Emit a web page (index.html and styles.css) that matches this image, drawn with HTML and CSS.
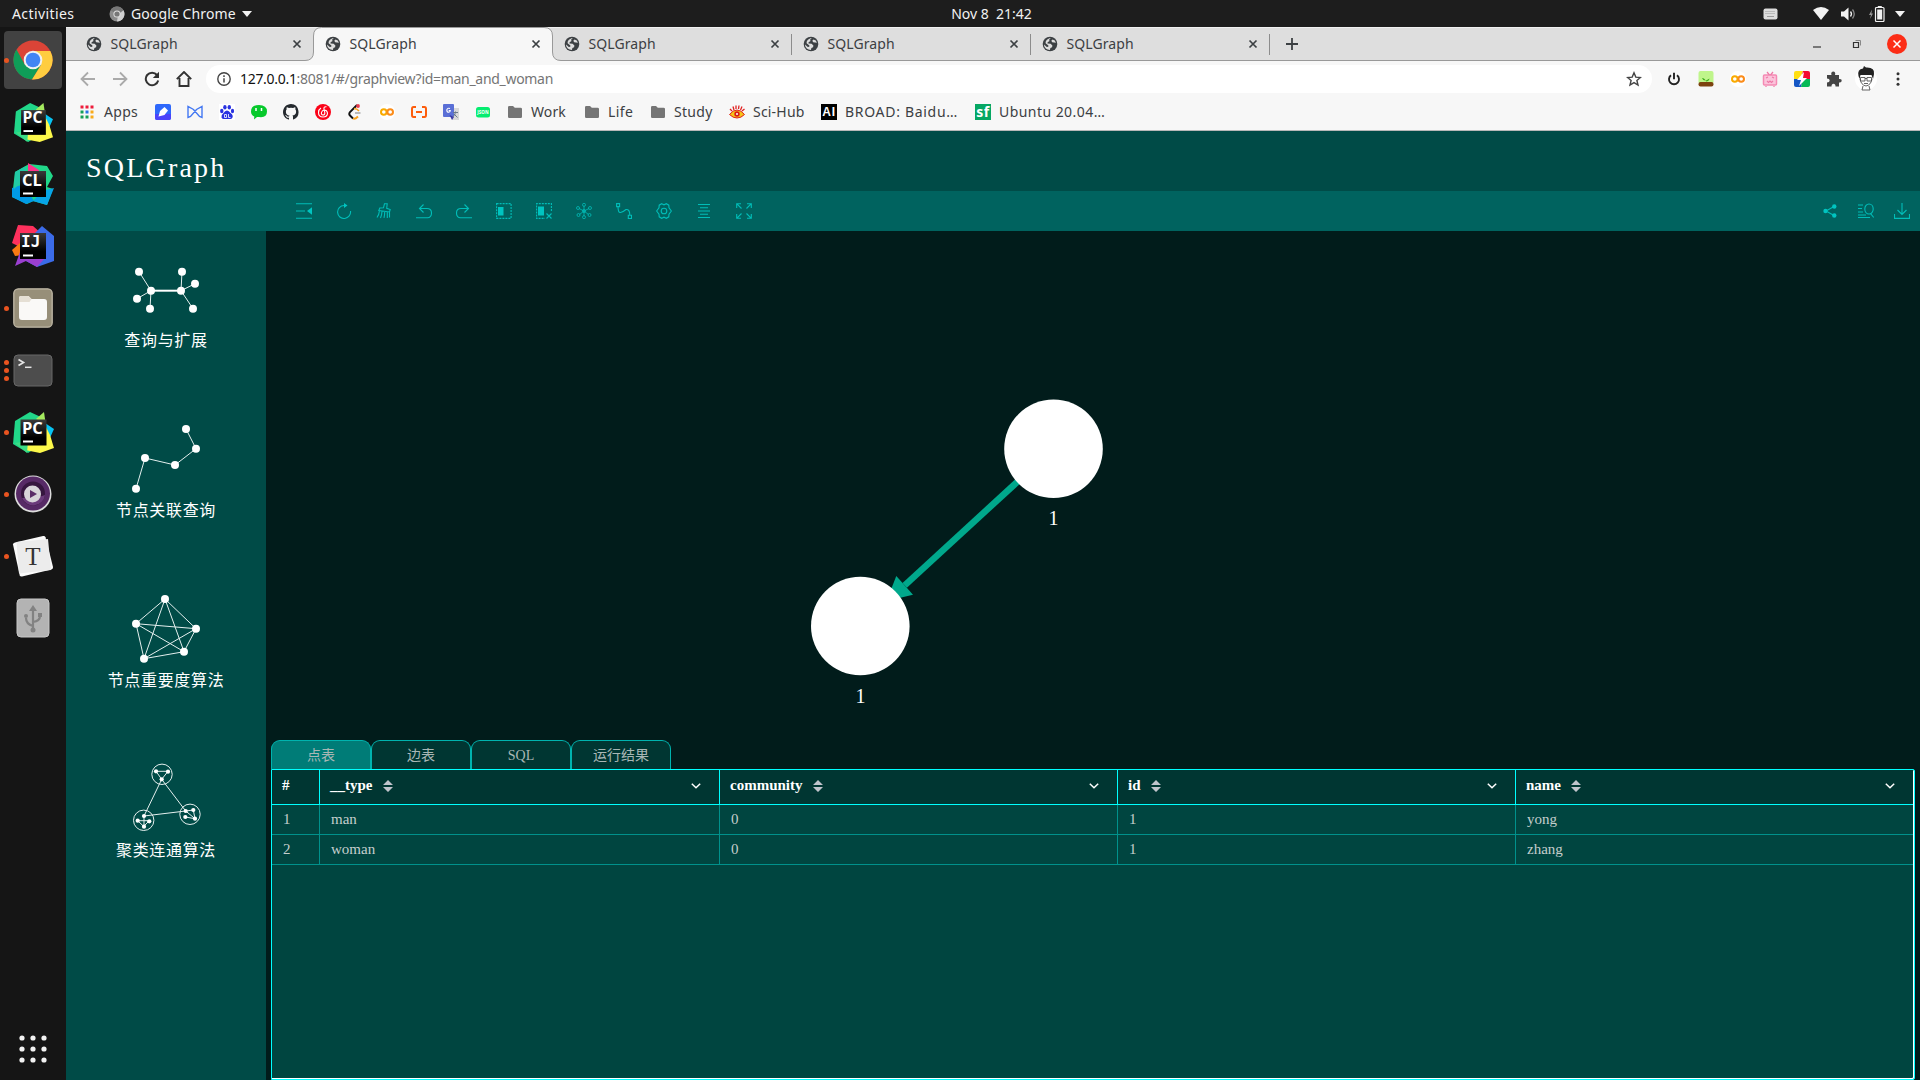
FILE: index.html
```html
<!DOCTYPE html>
<html lang="zh-CN">
<head>
<meta charset="utf-8">
<title>SQLGraph</title>
<link rel="stylesheet" href="styles.css">
</head>
<body>
<svg class="defs" width="0" height="0" aria-hidden="true">
  <symbol id="globe" viewBox="0 0 16 16"><circle cx="8" cy="8" r="7.300" fill="#3c4043"/><path d="M8.800 2.200 7 3.800 7.600 5 5.600 6.200 5.500 7.600 8.600 7.800l1.800 1.700-.3 1.800-1.700.8-.5 2C4.800 14 2 11.700 2 8.600L4.800 11l1.500-.2.1-1.300L3.600 7.200C3.400 4.400 6 2 8.800 2.200zM10.500 3.400l2.300 1.200 1.100 2.200-1.800-.4-1.900-.2-.9-1.400z" fill="#dedede"/></symbol>
  <symbol id="close" viewBox="0 0 10 10"><path d="M1.500 1.500l7 7M8.500 1.500l-7 7" stroke="#3c4043" stroke-width="1.700" fill="none"/></symbol>
  <symbol id="folder" viewBox="0 0 16 16"><path d="M1 3.200Q1 2 2.200 2H6l1.800 1.800h5.800Q15 3.800 15 5v7.700q0 1.300-1.300 1.300H2.300Q1 14 1 12.700z" fill="#757575"/></symbol>
  <symbol id="sort" viewBox="0 0 10 12"><path d="M5 0l5 5H0zM5 12l5-5H0z" fill="#c0c4cc"/></symbol>
  <symbol id="chevron" viewBox="0 0 10 6"><path d="M.8.8 5 4.800 9.200.8" fill="none" stroke="#fff" stroke-width="1.500"/></symbol>
  <symbol id="colab" viewBox="0 0 16 16"><circle cx="8" cy="8" r="8" fill="#fff"/><circle cx="4.800" cy="8" r="2.800" fill="none" stroke="#f9ab00" stroke-width="2"/><circle cx="11.200" cy="8" r="2.800" fill="none" stroke="#fb8c1a" stroke-width="2"/></symbol>
  <linearGradient id="ink" x1="0" y1="0" x2="0" y2="1"><stop offset="0" stop-color="#3a3a3a"/><stop offset=".7" stop-color="#000"/></linearGradient>
  <symbol id="pycharm" viewBox="0 0 42 42"><path d="M3 10 18 1l13 6-4 28-11 7L1 33z" fill="#21d789"/><path d="M24 8 32 1l2 14z" fill="#a4ea5f"/><path d="M33 12l9 6-5 11-9-3z" fill="#07c3f2"/><path d="M33 14l5 10 4 13-14 5-15-3 3-10z" fill="#fcf84a"/><path d="M3 32l13-2-1 12z" fill="#3ddc84"/><rect x="8.500" y="8.500" width="26" height="26" fill="url(#ink)"/><path d="M11 29.500h10v2H11z" fill="#fff"/><text x="10" y="22.500" class="ide">PC</text></symbol>
</svg>

<header class="topbar">
  <div class="left">
    <span class="activities">Activities</span>
    <svg width="16" height="16" viewBox="0 0 16 16"><circle cx="8" cy="8" r="7.500" fill="#8c8c8c"/><path d="M8 8 1.500 4.200A7.500 7.500 0 0 1 14.500 4.300z" fill="#777"/><path d="M9 9l5.500-4.700A7.500 7.500 0 0 1 8 15.500z" fill="#d0d0d0"/><circle cx="8" cy="8" r="3.600" fill="#e0e0e0"/><circle cx="8" cy="8" r="2.600" fill="#777"/></svg>
    <span class="app-name">Google Chrome</span>
    <svg width="10" height="6" viewBox="0 0 10 6"><path d="M0 0h10L5 6z" fill="#f2f2f2"/></svg>
  </div>
  <span class="clock">Nov 8&nbsp; 21:42</span>
  <span class="tray">
    <svg class="kbd" width="15" height="12" viewBox="0 0 15 12"><rect x=".5" y=".5" width="14" height="11" rx="2" fill="#dcdcdc"/><path d="M2.500 3.500h10M2.500 5.500h10" stroke="#999" stroke-dasharray="1 1"/><path d="M4 8.500h7" stroke="#999"/></svg>
    <svg class="wifi" width="16" height="13" viewBox="0 0 16 13"><path d="M0 3Q8-3 16 3L8 13z" fill="#f2f2f2"/></svg>
    <svg class="vol" width="15" height="14" viewBox="0 0 15 14"><path d="M0 4.500h3L7.500.500v13L3 9.500H0z" fill="#f2f2f2"/><path d="M9.500 4.500q2 2.500 0 5" stroke="#f2f2f2" fill="none" stroke-width="1.300"/><path d="M11.500 2.500q3.500 4.500 0 9" stroke="#888" fill="none" stroke-width="1.300"/></svg>
    <svg class="bat" width="16" height="16" viewBox="0 0 16 16"><path d="M3 3.500 0 9h2l-1 4 3-5.500H2.400z" fill="#999"/><rect x="6.500" y="1.500" width="8.500" height="14" rx="1" fill="none" stroke="#f2f2f2" stroke-width="1.200"/><path d="M8.800 0h4v2h-4zM8.200 3.500h5v10H8.200z" fill="#f2f2f2"/></svg>
    <svg width="10" height="6" viewBox="0 0 10 6"><path d="M0 0h10L5 6z" fill="#f2f2f2"/></svg>
  </span>
</header>

<div class="desktop">
  <nav class="dock">
    <div class="dock-item run1 current"><svg width="42" height="42" viewBox="0 0 42 42"><circle cx="21" cy="21" r="19.500" fill="#db4437"/><path d="M4.500 10.500A19.500 19.500 0 0 0 20 40.500l9-14.500-8-5-8 5z" fill="#0f9d58"/><path d="M21 12h17.300A19.500 19.500 0 0 1 20 40.500L29 26z" fill="#ffcd40"/><circle cx="21" cy="21" r="9.300" fill="#f1f1f1"/><circle cx="21" cy="21" r="7.300" fill="#4285f4"/></svg></div>
    <div class="dock-item"><svg width="40" height="40"><use href="#pycharm"/></svg></div>
    <div class="dock-item"><svg width="42" height="42" viewBox="0 0 42 42"><path d="M3 9 17 1l18 2 6 10-6 11 6 2-6 16-14-4-6 3L0 34z" fill="#21d789"/><path d="M0 25l12-4 10 17-8 3L0 34z" fill="#009ae5"/><path d="M16 0l11 7-2 8-9-2z" fill="#ff318c"/><path d="M30 28l12-3-7 17-14-4z" fill="#07a5e8"/><path d="M3 9l11-6v12L2 26z" fill="#22c9a6"/><rect x="8" y="8" width="26" height="26" fill="url(#ink)"/><path d="M11 29.500h10v2H11z" fill="#fff"/><text x="10" y="22.500" class="ide">CL</text></svg></div>
    <div class="dock-item"><svg width="42" height="42" viewBox="0 0 42 42"><path d="M6 0l15 1 9 8-8 20L0 18z" fill="#fe315d"/><path d="M30 1l12 10v25L25 42 14 36 22 9z" fill="#3b6be8"/><path d="M0 25l8-7 3 12-8 1z" fill="#f97a12"/><path d="M8 27l26 5-9 10-11-6-11 5z" fill="#9b3fd0"/><rect x="8" y="8" width="26" height="26" fill="url(#ink)"/><path d="M11 29.500h10v2H11z" fill="#fff"/><text x="9" y="22" class="ide mono">IJ</text></svg></div>
    <div class="dock-item run1"><svg width="40" height="40" viewBox="0 0 40 40"><rect x=".8" y=".8" width="38.400" height="38.400" rx="4.500" fill="#978f79" stroke="#c0b9a7" stroke-width="1.300"/><path d="M6 10q0-2 2-2h7.500l3 3H31q3 0 3 3v15q0 3-3 3H9q-3 0-3-3z" fill="#faf9f7"/><path d="M6 12v-2q0-2 2-2h7.500l3 3-2 3H6z" fill="#e5dfd4"/></svg></div>
    <div class="dock-item run3"><svg width="40" height="33" viewBox="0 0 40 33"><rect x="1" y="1" width="38" height="31" rx="4" fill="#4d4d4d" stroke="#686868"/><path d="M5.500 5.500l5 3-5 3" stroke="#e5e5e5" stroke-width="1.700" fill="none"/><path d="M12 13.300h6.500" stroke="#e5e5e5" stroke-width="1.500"/></svg></div>
    <div class="dock-item run1"><svg width="42" height="42"><use href="#pycharm"/></svg></div>
    <div class="dock-item run1"><svg width="38" height="38" viewBox="0 0 38 38"><circle cx="19" cy="19" r="18.500" fill="#ddd"/><circle cx="19" cy="18.500" r="17" fill="#572a66"/><circle cx="19" cy="18.500" r="12" fill="#36163f"/><path d="M8 23A12 12 0 0 0 31 20l-6 2z" fill="#6b3b7b"/><circle cx="18.500" cy="19" r="8.500" fill="#d8d5da"/><path d="M16 15l7 4-7 4z" fill="#5b2e69"/></svg></div>
    <div class="dock-item run1"><svg width="42" height="42" viewBox="0 0 42 42"><path d="M1 9.500Q1 8 3 7.500L31 1q2-.3 2.500 1.200L41 32q.3 1.800-1.500 2.500L10 41.500q-1.800.3-2.300-1.300z" fill="#fbfbfb"/><path d="M4.500 7 36 4l3 31-32 3.500z" fill="#ececec"/><text x="21" y="30" text-anchor="middle" class="typora">T</text></svg></div>
    <div class="dock-item"><svg width="34" height="40" viewBox="0 0 34 40"><rect x="1" y="1" width="32" height="38" rx="4" fill="#b3b3b3" stroke="#c8c8c8"/><path d="M17 11v21M17 28q-7-2-7-8M17 24q7-1 7-6" stroke="#828282" stroke-width="2.200" fill="none"/><path d="M13 13l4-6 4 6z" fill="#828282"/><circle cx="17" cy="32" r="2.500" fill="#828282"/><circle cx="10" cy="18" r="2" fill="#828282"/><path d="M22 15h4v4h-4z" fill="#828282"/></svg></div>
    <div class="show-apps"><svg width="28" height="28" viewBox="0 0 28 28" fill="#f2f2f2"><circle cx="3" cy="3" r="2.600"/><circle cx="14" cy="3" r="2.600"/><circle cx="25" cy="3" r="2.600"/><circle cx="3" cy="14" r="2.600"/><circle cx="14" cy="14" r="2.600"/><circle cx="25" cy="14" r="2.600"/><circle cx="3" cy="25" r="2.600"/><circle cx="14" cy="25" r="2.600"/><circle cx="25" cy="25" r="2.600"/></svg></div>
  </nav>

  <div class="browser">
    <div class="tabstrip">
      <div class="tab"><svg class="fav"><use href="#globe"/></svg><span>SQLGraph</span><svg class="x"><use href="#close"/></svg></div>
      <div class="tab active"><svg class="shape" width="256" height="34" viewBox="0 0 256 34"><path d="M0 33.500Q8.500 33.500 8.500 25V9Q8.500 .5 16.500 .5H239Q247.500 .5 247.500 9V25Q247.500 33.500 256 33.500V35H0z" fill="#f7f7f7"/><path d="M0 33.500Q8.500 33.500 8.500 25V9Q8.500 .5 16.500 .5H239Q247.500 .5 247.500 9V25Q247.500 33.500 256 33.500" fill="none" stroke="#999"/></svg><svg class="fav"><use href="#globe"/></svg><span>SQLGraph</span><svg class="x"><use href="#close"/></svg></div>
      <div class="tab sep"><svg class="fav"><use href="#globe"/></svg><span>SQLGraph</span><svg class="x"><use href="#close"/></svg></div>
      <div class="tab sep"><svg class="fav"><use href="#globe"/></svg><span>SQLGraph</span><svg class="x"><use href="#close"/></svg></div>
      <div class="tab sep"><svg class="fav"><use href="#globe"/></svg><span>SQLGraph</span><svg class="x"><use href="#close"/></svg></div>
      <svg class="newtab" width="12" height="12" viewBox="0 0 12 12"><path d="M6 0v12M0 6h12" stroke="#3c4043" stroke-width="1.800"/></svg>
      <div class="winctl">
        <svg width="10" height="16" viewBox="0 0 10 16"><path d="M1 11h8" stroke="#333" stroke-width="1.200"/></svg>
        <svg width="10" height="10" viewBox="0 0 10 10"><path d="M1.500 3.500h5v5h-5z" stroke="#333" stroke-width="1.200" fill="none"/><path d="M3.500 1.500h5v5" stroke="#888" fill="none"/></svg>
        <svg width="20" height="20" viewBox="0 0 20 20"><circle cx="10" cy="10" r="10" fill="#fc2d16"/><path d="M6.500 6.500l7 7M13.500 6.500l-7 7" stroke="#fff" stroke-width="1.500"/></svg>
      </div>
    </div>

    <div class="navbar">
      <div class="nav-btns">
        <svg viewBox="0 0 16 16"><path d="M15 8H2M8 1.500 1.500 8 8 14.500" stroke="#aaa" stroke-width="1.800" fill="none"/></svg>
        <svg viewBox="0 0 16 16"><path d="M1 8h13M8 1.500 14.500 8 8 14.500" stroke="#aaa" stroke-width="1.800" fill="none"/></svg>
        <svg viewBox="0 0 16 16"><path d="M13 4A6.300 6.300 0 1 0 14.200 9.500" stroke="#333" stroke-width="2" fill="none"/><path d="M15 .8V7H8.800z" fill="#333"/></svg>
        <svg viewBox="0 0 16 16"><path d="M3.500 7v8h9V7M.8 8.200 8 1l7.200 7.200" stroke="#333" stroke-width="1.900" fill="none"/></svg>
      </div>
      <div class="omnibox">
        <svg width="14" height="14" viewBox="0 0 14 14"><circle cx="7" cy="7" r="6.200" fill="none" stroke="#444" stroke-width="1.400"/><path d="M7 6.200v4.200M7 3.300v1.600" stroke="#444" stroke-width="1.500"/></svg>
        <span class="url"><b>127.0.0.1</b>:8081/#/graphview?id=man_and_woman</span>
        <svg class="star" width="16" height="16" viewBox="0 0 16 16"><path d="M8 1.800l1.800 4.300 4.600.4-3.500 3 1.100 4.500L8 11.600 4 14l1.100-4.500-3.500-3 4.600-.4z" stroke="#444" stroke-width="1.400" fill="none"/></svg>
      </div>
      <div class="exts">
        <svg viewBox="0 0 16 16"><path d="M5 4.300a5 5 0 1 0 6 0M8 1.800v6.400" stroke="#222" stroke-width="1.900" fill="none"/></svg>
        <svg viewBox="0 0 16 16"><rect x=".5" width="15" height="13" rx="2" fill="#bff58b"/><path d="M8 10.500Q7 7 4 7q1 3 4 2.500Q9 9 11.500 7.500 11 10.500 8 10.500z" fill="#3eae1c"/><rect x=".5" y="11" width="15" height="4.500" rx="2" fill="#7c4310"/></svg>
        <svg><use href="#colab"/></svg>
        <svg viewBox="0 0 16 16"><rect x="1.500" y="4" width="13" height="10" rx="1" fill="#fbc4db" stroke="#f58ab4" stroke-width="1.500"/><path d="M5 1l2.500 3M11 1 8.500 4M4 7l2-1M12 7l-2-1M5 10l1.500 1.500L8 10l1.500 1.500L11 10M4 15v1M12 15v1" stroke="#ee79a7" fill="none" stroke-width="1.200"/></svg>
        <svg viewBox="0 0 16 16"><path d="M0 2Q0 0 2 0h7L6 8H0z" fill="#ffdf12"/><path d="M9 0h5q2 0 2 2v6H7z" fill="#f40a30"/><path d="M0 8h9l-2 8H2q-2 0-2-2z" fill="#1557c5"/><path d="M9 8h7v6q0 2-2 2H7z" fill="#06b957"/><path d="M10 1 3 9h4l-2 6 8-8H9z" fill="#fff"/></svg>
        <svg viewBox="0 0 16 16"><path d="M1 4h4.500q-1-3 1.500-3.500Q10 .5 9 4h4v4q3-.5 2.700 1.800Q15.500 12 13 11.500V15.500H9.500q0-2.800-2-2.800t-2 2.800H1V11.500q2.700 0 2.700-2T1 7.500z" fill="#444"/></svg>
        <svg class="avatar" viewBox="0 0 22 26"><circle cx="11" cy="13" r="11" fill="#fff"/><path d="M3.500 10Q2 3 8 2.500l1-2.500 2 1.500Q20 1 19 8l-1 5-1.500-4-11 0L4.500 13z" fill="#222"/><path d="M5.500 11.500h4.500v3.500H5.500zM12 11.500h4.500v3.500H12zM10 12.500h2M5 13q1 6 6 7 5-1 6-7M9 17.500h4M8 20l-1 4h8l-1-4" fill="none" stroke="#555" stroke-width=".9"/></svg>
        <svg viewBox="0 0 16 16" fill="#333"><circle cx="8" cy="2.800" r="1.500"/><circle cx="8" cy="8" r="1.500"/><circle cx="8" cy="13.200" r="1.500"/></svg>
      </div>
    </div>

    <div class="bookmarks">
      <span class="bm w-apps"><svg viewBox="0 0 16 16"><path d="M1.500 1.500h3v3h-3zM6.500 1.500h3v3h-3zM11.500 1.500h3v3h-3z" fill="#ee1c3b"/><path d="M1.500 6.500h3v3h-3zM1.500 11.500h3v3h-3zM6.500 11.500h3v3h-3z" fill="#149f58"/><path d="M6.500 6.500h3v3h-3z" fill="#2474e5"/><path d="M11.500 6.500h3v3h-3zM11.500 11.500h3v3h-3z" fill="#f9ab1a"/></svg>Apps</span>
      <span class="bm"><svg viewBox="0 0 16 16"><rect width="16" height="16" rx="2" fill="#2e68fb"/><path d="M0 10h16v4q0 2-2 2H2q-2 0-2-2z" fill="#4b43fa"/><path d="M3.500 12.500 5 7l4.500-4L13 6.500 9.500 11z" fill="#fff"/></svg></span>
      <span class="bm"><svg viewBox="0 0 16 16"><path d="M1 2.500V13.500L3.500 12.500 9.500 5.500 15 2.500V13.500L12.500 12.500 6.500 5.500z" fill="none" stroke="#4378f2" stroke-width="1.400"/></svg></span>
      <span class="bm"><svg viewBox="0 0 16 16"><rect width="16" height="16" fill="#fff"/><g fill="#2932e1"><ellipse cx="2.800" cy="7" rx="1.700" ry="2.200"/><ellipse cx="5.900" cy="3.200" rx="1.700" ry="2.300"/><ellipse cx="10.300" cy="3.200" rx="1.700" ry="2.300"/><ellipse cx="13.500" cy="7" rx="1.600" ry="2.200"/><path d="M8 6.500q2 0 3.500 2.500 3 2 2 4.500-1 2-3 1.500H5.500q-2 .5-3-1.500-.7-2.500 2-4.500Q6 6.500 8 6.500z"/></g><path d="M5.500 10.500h2v3h-2zM9.500 10v3.500h2" fill="none" stroke="#fff" stroke-width=".8"/></svg></span>
      <span class="bm"><svg viewBox="0 0 16 16"><path d="M8 1q8 0 8 6.500T8 13q-1 0-2 0l-3 2.500.3-3Q0 11 0 7.500 0 1 8 1z" fill="#07c92c"/><path d="M5 4v3M10.500 4v3" stroke="#fff" stroke-width="1.500"/></svg></span>
      <span class="bm"><svg viewBox="0 0 16 16"><path d="M8 0C3.600 0 0 3.600 0 8c0 3.500 2.300 6.500 5.500 7.600.4.1.5-.2.500-.4v-1.500c-2.200.5-2.700-1-2.700-1-.4-.9-.9-1.200-.9-1.200-.7-.5.1-.5.1-.5.800.1 1.200.8 1.200.8.700 1.200 1.900.9 2.300.7.100-.5.300-.9.500-1.100-1.800-.2-3.600-.9-3.600-4 0-.9.300-1.600.8-2.100-.1-.2-.4-1 .1-2.100 0 0 .7-.2 2.200.8a7.500 7.500 0 0 1 4 0c1.500-1 2.200-.8 2.200-.8.400 1.100.2 1.900.1 2.100.5.600.8 1.300.8 2.100 0 3.100-1.900 3.700-3.700 3.900.3.300.6.800.6 1.500v2.200c0 .2.100.5.500.4A8 8 0 0 0 8 0z" fill="#24292e"/></svg></span>
      <span class="bm"><svg viewBox="0 0 16 16"><circle cx="8" cy="8" r="8" fill="#fb0218"/><path d="M11.500 2.800Q8.500 2.500 9 5l.8 3.500Q10 11 8 11q-2-.3-1.500-2.500T9 6q3 0 3.500 3 0 4-4.500 4T3.500 8.500Q3.500 5.500 6 4" fill="none" stroke="#fff" stroke-width="1.100"/></svg></span>
      <span class="bm"><svg viewBox="0 0 16 16"><path d="M10 1 3 8Q1.500 10 3 11.500L6 14.500" fill="none" stroke="#111" stroke-width="1.900"/><path d="M6 14.500q2 1 5-2" stroke="#f8a11c" stroke-width="1.900" fill="none"/><path d="M8 9h5.500" stroke="#b3b3b3" stroke-width="1.800"/><path d="M7 4.500Q10 4.500 12 7" stroke="#f8a11c" stroke-width="1.500" fill="none"/><circle cx="11" cy="2" r="1.900" fill="#ea3c4d"/></svg></span>
      <span class="bm"><svg><use href="#colab"/></svg></span>
      <span class="bm"><svg viewBox="0 0 16 16"><path d="M5 3H2.500Q1 3 1 5v6q0 2 1.500 2H5M11 3h2.500Q15 3 15 5v6q0 2-1.500 2H11M5 8h6" stroke="#fd5d0c" stroke-width="2" fill="none"/></svg></span>
      <span class="bm"><svg viewBox="0 0 16 16"><path d="M7 4h9v12H9z" fill="#d8d8d8"/><rect width="11" height="13" rx="1" fill="#5a6fd6"/><path d="M6.500 11 9 16l2-3z" fill="#3a37a8"/><path d="M7 4.500Q4.500 3.500 3.800 6q0 2.300 2 2.300Q7.300 8 7.300 6.500H5.700" fill="none" stroke="#fff" stroke-width="1.100"/><path d="M10 8.500h5M12.500 7.500q0 4-3 5.500M11 10l3.500 3.500" stroke="#6a7a8a" fill="none"/></svg></span>
      <span class="bm"><svg viewBox="0 0 16 16"><rect x="1" y="3" width="14" height="10.500" rx="2.500" fill="#05ed70"/><text x="8" y="10.300" text-anchor="middle" class="json">JSON</text></svg></span>
      <span class="bm w-work"><svg><use href="#folder"/></svg>Work</span>
      <span class="bm w-life"><svg><use href="#folder"/></svg>Life</span>
      <span class="bm w-study"><svg><use href="#folder"/></svg>Study</span>
      <span class="bm w-sci"><svg viewBox="0 0 16 16"><path d="M1 5 3 7M4 2.500 5 6M7 1.500V5M10 1.500 9.500 5M13 2.500 11.500 6M15.500 5 13 7" stroke="#e02020" stroke-width="1.300"/><path d="M.5 10.500Q4 6 8 6t7.500 4.500Q12 14 8 14T.5 10.500z" fill="#f5c518" stroke="#e02020"/><circle cx="8" cy="10" r="2.700" fill="#d91a1a"/><circle cx="8" cy="10" r="1" fill="#fff"/></svg>Sci-Hub</span>
      <span class="bm w-broad"><svg viewBox="0 0 16 16"><rect width="16" height="16"/><text x="8" y="12.300" text-anchor="middle" class="ai">AI</text></svg>BROAD: Baidu…</span>
      <span class="bm w-ubuntu"><svg viewBox="0 0 16 16"><rect width="16" height="16" fill="#06a763"/><text x="8" y="13" text-anchor="middle" class="sf">sf</text></svg>Ubuntu 20.04…</span>
    </div>

    <main class="page">
      <div class="brand">SQLGraph</div>
      <div class="toolbar">
        <div class="tools">
          <svg viewBox="0 0 16 16"><path d="M0 .8h16M0 8h9M0 15.200h16"/><path d="M16 4.300v7.400L11 8z" class="f"/></svg>
          <svg viewBox="0 0 16 16"><path d="M8 2.500A6.500 6.500 0 1 0 14.500 8"/><path d="M8 0v5l3.500-2.500z" class="f"/></svg>
          <svg viewBox="0 0 16 16"><path d="M8.500.700 7.500 4.800 3.800 5 2.800 7.500l10.700 1.500.7-2.500-3.500-1.200.5-4.600zM3.500 7.800Q3 12 1 14.500M6 8.300Q5.800 12 4.500 15M8.700 8.800q0 3-.7 6M11.300 9v6M13.500 9v5.500"/></svg>
          <svg viewBox="0 0 16 16"><path d="M0 14.800h11.500Q15.500 14.500 15.500 10T11 5.500H4M7.500 1.500 3.500 5.500l4 4"/></svg>
          <svg viewBox="0 0 16 16"><path d="M16 14.800H4.500Q.5 14.500.5 10T5 5.500h7M8.500 1.500l4 4-4 4"/></svg>
          <svg viewBox="0 0 16 16"><path d="M.6.600h14.500v14.800H.6z" class="dash"/><path d="M2 4h5.500v8.500H2z" class="f"/></svg>
          <svg viewBox="0 0 16 16"><path d="M15.400 8V.6H.6v14.800H9" class="dash"/><path d="M2 3.500h6v9H2z" class="f"/><path d="M10.500 10.500l5 5M15.500 10.500l-5 5"/></svg>
          <svg viewBox="0 0 16 16" class="thin"><path d="M8 8V3M8 8v5M8 8 3 5.500M8 8l5-2.500M8 8l-4.500 3.500M8 8l4.500 3.500"/><circle cx="8" cy="8" r="1.500"/><circle cx="8" cy="1.800" r="1.500"/><circle cx="8" cy="14.200" r="1.500"/><circle cx="2" cy="5" r="1.500"/><circle cx="14" cy="5" r="1.500"/><circle cx="2.500" cy="12" r="1.500"/><circle cx="13.500" cy="12" r="1.500"/></svg>
          <svg viewBox="0 0 16 16"><path d="M.6.600h3v3h-3zM12.300 12.300h3.200v3.200h-3.200zM2 3.500Q2 10 4.500 9.500T10 6.500Q13.800 6 13.800 12"/></svg>
          <svg viewBox="0 0 16 16"><path d="M5.700.7 8 1.800l2.300-1.100 2.500 1.500.2 2.500L15.400 8 13 11.300l-.2 2.500-2.500 1.500L8 14.200l-2.300 1.100-2.500-1.500L3 11.300.6 8 3 4.700l.2-2.500z"/><circle cx="8" cy="8" r="2.800"/></svg>
          <svg viewBox="0 0 16 16"><path d="M2 1.500h12M4 4.800h8M2 8h12M4 11.200h8M2 14.500h12"/></svg>
          <svg viewBox="0 0 16 16"><path d="M.7 5V.7H5M.7.700 5.500 5.500M11 .7h4.300V5M15.300.700 10.500 5.500M.7 11v4.300H5M.7 15.300 5.500 10.500M11 15.300h4.300V11M15.300 15.300l-4.800-4.800"/></svg>
        </div>
        <div class="tools right">
          <svg viewBox="0 0 16 16"><path d="M12 3.500 4 8l8 4.500"/><circle cx="12.300" cy="3.500" r="2.200" class="f"/><circle cx="3.500" cy="8" r="2.200" class="f"/><circle cx="12.300" cy="12.500" r="2.200" class="f"/></svg>
          <svg viewBox="0 0 16 16"><path d="M0 2h5M0 5.500h4M0 9h5M0 12h8M0 14.500h12"/><ellipse cx="11" cy="6" rx="4.200" ry="5"/><path d="M12.500 10.500l3.200 4"/></svg>
          <svg viewBox="0 0 16 16"><path d="M8 0v11M3.500 7 8 11.500 12.500 7M.5 11v4.400h15V11"/></svg>
        </div>
      </div>

      <div class="workspace">
        <aside class="sidebar">
          <div class="algo">
            <svg viewBox="126 250 80 80" width="80" height="80"><path d="M139 271.700l12 19-14 8M151 290.700l-1 18M182 271.700l-1 19 14-7M181 290.700l12 18"/><path d="M151 290.700h30" class="bold"/><g><circle cx="139" cy="271.700" r="4"/><circle cx="182" cy="271.700" r="4"/><circle cx="195" cy="283.700" r="4"/><circle cx="181" cy="290.700" r="4"/><circle cx="151" cy="290.700" r="4"/><circle cx="137" cy="298.700" r="4"/><circle cx="150" cy="308.700" r="4"/><circle cx="193" cy="308.700" r="4"/></g></svg>
            <span>查询与扩展</span>
          </div>
          <div class="algo">
            <svg viewBox="126 420 80 80" width="80" height="80"><path d="M186 429l10 19.700-21 16.300-30-7-9 30.700"/><g><circle cx="186" cy="429" r="4"/><circle cx="196" cy="448.700" r="4"/><circle cx="175" cy="465" r="4"/><circle cx="145" cy="458" r="4"/><circle cx="136" cy="488.700" r="4"/></g></svg>
            <span>节点关联查询</span>
          </div>
          <div class="algo">
            <svg viewBox="126 590 80 80" width="80" height="80"><path d="M165 599l-29 24.700 8 35 40-7 12-23zl-21 59.700 52-30-60-5 48 28z"/><g><circle cx="165" cy="599" r="4"/><circle cx="136" cy="623.700" r="4"/><circle cx="196" cy="628.700" r="4"/><circle cx="184" cy="651.700" r="4"/><circle cx="144" cy="658.700" r="4"/></g></svg>
            <span>节点重要度算法</span>
          </div>
          <div class="algo">
            <svg viewBox="126 760 80 80" width="80" height="80"><circle cx="162" cy="774.300" r="10.200"/><circle cx="143.700" cy="820.300" r="10.200"/><circle cx="190" cy="814.300" r="10.200"/><path d="M161.700 779.300 144 816l41.700-5zL156 771.300h12zM144 816v10.700l-6.300-6h11.600l-5.300 5.400M185.700 811l7.600-1 1.700 8.700zM195 818.700l-9.700-1.700"/><g><circle cx="156" cy="771.300" r="2.100"/><circle cx="168" cy="771.700" r="2.100"/><circle cx="161.700" cy="779.300" r="2.100"/><circle cx="144" cy="816" r="2.100"/><circle cx="137.700" cy="820.700" r="2.100"/><circle cx="149.300" cy="821.300" r="2.100"/><circle cx="144" cy="826.700" r="2.100"/><circle cx="185.700" cy="811" r="2.100"/><circle cx="193.300" cy="810" r="2.100"/><circle cx="185.300" cy="817" r="2.100"/><circle cx="195" cy="818.700" r="2.100"/></g></svg>
            <span>聚类连通算法</span>
          </div>
        </aside>

        <section class="content">
          <svg class="graph" width="1654" height="509" viewBox="266 231 1654 509">
            <path d="M1053.300 448.800 904.700 585.300" stroke="#00a88c" stroke-width="6.500"/>
            <path d="M896.300 576l16.700 18.700L886.500 601z" fill="#00a88c"/>
            <circle cx="1053.500" cy="448.800" r="49.300" fill="#fff"/>
            <circle cx="860.300" cy="626" r="49.300" fill="#fff"/>
            <text x="1053.500" y="525" text-anchor="middle">1</text>
            <text x="860.500" y="703" text-anchor="middle">1</text>
          </svg>
          <div class="result">
            <div class="rtabs"><span class="on">点表</span><span>边表</span><span>SQL</span><span>运行结果</span></div>
            <div class="panel">
              <div class="row head">
                <div>#</div>
                <div>__type<svg class="sort"><use href="#sort"/></svg><svg class="chev"><use href="#chevron"/></svg></div>
                <div>community<svg class="sort"><use href="#sort"/></svg><svg class="chev"><use href="#chevron"/></svg></div>
                <div>id<svg class="sort"><use href="#sort"/></svg><svg class="chev"><use href="#chevron"/></svg></div>
                <div>name<svg class="sort"><use href="#sort"/></svg><svg class="chev"><use href="#chevron"/></svg></div>
              </div>
              <div class="row"><div>1</div><div>man</div><div>0</div><div>1</div><div>yong</div></div>
              <div class="row"><div>2</div><div>woman</div><div>0</div><div>1</div><div>zhang</div></div>
            </div>
          </div>
        </section>
      </div>
    </main>
  </div>
</div>
</body>
</html>
```
FILE: styles.css
```css
* { box-sizing: border-box; }
body {
  margin: 0;
  width: 1920px;
  height: 1080px;
  overflow: hidden;
  background: #141414;
  font-family: "Noto Sans", "Noto Sans CJK SC", sans-serif;
  font-size: 14px;
  display: flex;
  flex-direction: column;
}
svg { display: block; flex: none; }
.defs { position: absolute; }

/* desktop top bar */
.topbar {
  height: 27px;
  background: #1d1d1d;
  color: #f2f2f2;
  display: grid;
  grid-template-columns: 1fr auto 1fr;
  align-items: center;
  line-height: 20px;
  padding: 0 15px 0 12px;
}
.left { display: flex; align-items: center; gap: 6px; }
.activities { width: 91px; letter-spacing: .4px; }
.app-name { letter-spacing: .1px; }
.clock { padding-left: 66px; white-space: nowrap; }
.tray { display: flex; align-items: center; justify-content: flex-end; }
.kbd { margin-right: 35px; }
.wifi { margin-right: 12px; }
.vol { margin-right: 13px; }
.bat { margin-right: 10px; }

.desktop { flex: 1; display: flex; min-height: 0; }

/* dock */
.dock {
  width: 66px;
  padding-top: 2px;
  background: #151515;
  display: flex;
  flex-direction: column;
}
.dock-item {
  position: relative;
  height: 62px;
  display: flex;
  align-items: center;
  justify-content: center;
}
.current::before {
  content: "";
  position: absolute;
  inset: 2px 4px;
  border-radius: 4px;
  background: #424242;
}
.current svg { position: relative; }
.run1::after, .run3::after {
  content: "";
  position: absolute;
  left: 4px;
  top: 28.500px;
  width: 5px;
  height: 5px;
  border-radius: 50%;
  background: #e95420;
}
.run3::after { box-shadow: 0 -8px #e95420, 0 8px #e95420; }
.show-apps { margin-top: auto; padding: 0 0 17px 19px; }
.ide { font: 700 16.500px "Open Sans", "Noto Sans", sans-serif; fill: #fff; }
.mono { font: 700 16px "DejaVu Sans Mono", monospace; }
.typora { font: 25px "Liberation Serif", serif; fill: #333; }

/* browser */
.browser { flex: 1; display: flex; flex-direction: column; background: #f7f7f7; color: #3c4043; }
.tabstrip {
  height: 34px;
  display: flex;
  align-items: center;
  background: #dedede;
  border-bottom: 1px solid #999;
  box-shadow: inset 0 1px #f0f0f0;
}
.tab {
  position: relative;
  width: 239px;
  height: 33px;
  padding: 0 0 1px 20px;
  display: flex;
  align-items: center;
  margin-top: 1px;
}
.tab > span { position: relative; margin-left: 8.500px; letter-spacing: .1px; }
.fav { position: relative; width: 16px; height: 16px; }
.x { position: relative; width: 10px; height: 10px; margin-left: auto; margin-right: 3px; }
.shape { position: absolute; left: 0; top: -1px; }
.tab.sep::after {
  content: "";
  position: absolute;
  right: -9px;
  top: 6px;
  width: 1px;
  height: 21px;
  background: #8c8c8c;
}
.newtab { margin-left: 25px; }
.winctl { margin-left: auto; display: flex; align-items: center; padding-right: 13px; gap: 30px; }
.winctl svg:last-child { margin-left: -5px; }

.navbar { height: 36px; display: flex; align-items: center; }
.nav-btns, .exts { display: flex; gap: 16px; }
.nav-btns { padding: 0 14px; width: 140px; }
.nav-btns svg, .exts svg { width: 16px; height: 16px; }
.exts { padding-left: 14px; align-items: center; }
.exts .avatar { width: 22px; height: 26px; margin: 0 -3px; }
.omnibox {
  width: 1446px;
  height: 28px;
  border-radius: 14px;
  background: #fff;
  display: flex;
  align-items: center;
  padding: 0 10px 0 11px;
}
.url { margin-left: 9px; padding-bottom: 1px; color: #757575; letter-spacing: -.3px; }
.url b { font-weight: 400; color: #111; }
.star { margin-left: auto; }

.bookmarks {
  height: 34px;
  padding: 0 0 4px 13px;
  display: flex;
  align-items: center;
  border-bottom: 1px solid #b8b8b8;
}
.bm { width: 32px; display: flex; align-items: center; gap: 8px; white-space: nowrap; letter-spacing: .1px; }
.bm svg { width: 16px; height: 16px; }
.w-apps { width: 76px; gap: 9px; letter-spacing: .3px; }
.w-work { width: 77px; }
.w-life { width: 66px; letter-spacing: .4px; }
.w-study { width: 79px; letter-spacing: .3px; }
.w-sci { width: 92px; letter-spacing: .2px; }
.w-broad { width: 154px; letter-spacing: .7px; }
.w-ubuntu { width: 130px; letter-spacing: .45px; }
.json { font: 700 4.500px "Noto Sans", sans-serif; fill: #fff; }
.ai { font: 600 12px "Liberation Sans", sans-serif; fill: #fff; }
.sf { font: 700 14px "Noto Sans", sans-serif; fill: #fff; }

/* page */
.page {
  flex: 1;
  display: flex;
  flex-direction: column;
  background: #011c1b;
  font-family: "Liberation Serif", "Noto Sans CJK SC", serif;
}
.brand {
  height: 60px;
  background: #004b47;
  color: #fff;
  font-size: 28px;
  letter-spacing: 2.200px;
  line-height: 74px;
  padding-left: 20px;
}
.toolbar {
  height: 40px;
  background: #00635f;
  display: flex;
  align-items: center;
  justify-content: space-between;
  padding: 0 10px 0 230px;
}
.tools { display: flex; gap: 24px; }
.tools.right { gap: 20px; }
.tools svg { width: 16px; height: 16px; fill: none; stroke: #00bdb8; stroke-width: 1.100; }
.tools .f { fill: #00c4c0; stroke: none; }
.tools .dash { stroke-dasharray: 2 1; }
.tools svg.thin { stroke-width: .8; }

.workspace { flex: 1; display: flex; }
.sidebar { width: 200px; padding-top: 19px; background: #004b47; }
.algo { height: 170px; display: flex; flex-direction: column; align-items: center; }
.algo svg { fill: none; stroke: #e4efee; stroke-width: 1; }
.algo svg g { fill: #fff; stroke: none; }
.algo .bold { stroke-width: 2; stroke: #fff; }
.algo span { color: #fff; font-size: 16px; letter-spacing: .67px; line-height: 22px; }

.content { flex: 1; display: flex; flex-direction: column; }
.graph text { font: 20px "Liberation Serif", serif; fill: #fff; }
.result { flex: 1; display: flex; flex-direction: column; padding: 0 5px; }
.rtabs { display: flex; height: 29px; }
.rtabs span {
  width: 100px;
  border: 1px solid #00b3ae;
  border-bottom: 0;
  border-radius: 9px 9px 0 0;
  background: #003632;
  color: #a9b7b5;
  text-align: center;
  font-size: 14px;
  line-height: 30px;
}
.rtabs .on { background: #007c77; }
.panel {
  flex: 1;
  background: #004540;
  border: 1px solid #0ff;
  border-radius: 0 2px 2px 0;
  box-shadow: inset -1px -1px #fff;
  padding-right: 1px;
}
.row {
  display: grid;
  grid-template-columns: 48px 400px 398px 398px 1fr;
  height: 30px;
  border-bottom: 1px solid #00918c;
  font-size: 15px;
  color: #c5cecd;
}
.row > div {
  display: flex;
  align-items: center;
  padding-left: 11px;
  border-right: 1px solid #00918c;
}
.row > div:last-child { border-right: 0; }
.row.head { height: 35px; background: #003632; border-color: #0ff; color: #fff; font-weight: 700; }
.row.head > div { border-color: #0ff; padding: 0 18px 3px 10px; }
.sort { width: 10px; height: 12px; margin: 1px 0 0 10px; }
.chev { width: 10px; height: 6px; margin-left: auto; }
```
